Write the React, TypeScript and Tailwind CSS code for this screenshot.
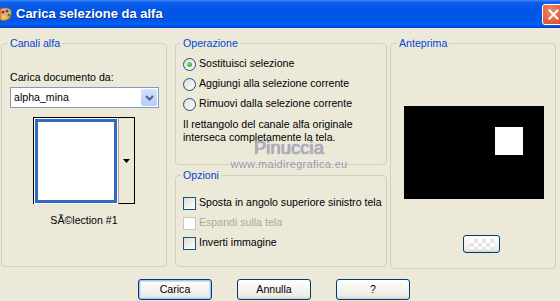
import React from "react";

const GroupBox = ({
  title,
  className,
  legendLeft,
  children,
}: {
  title: string;
  className: string;
  legendLeft: string;
  children?: React.ReactNode;
}) => {
  return (
    <div className={`relative rounded-[4px] border border-[#D0D0BF] ${className}`}>
      <span
        className={`absolute -top-[8px] ${legendLeft} bg-[#ECE9D8] px-[2px] leading-[14px] text-[#0046D5]`}
      >
        {title}
      </span>
      {children}
    </div>
  );
};

const Radio = ({ label, checked }: { label: string; checked?: boolean }) => (
  <div className="flex h-[20px] items-center">
    <div className="flex h-[13px] w-[13px] items-center justify-center rounded-full border border-[#1C5180] bg-[linear-gradient(135deg,#DCDBD5,#FFFFFF)]">
      {checked && (
        <div className="h-[5px] w-[5px] rounded-full bg-[radial-gradient(circle_at_35%_35%,#7BE27B,#21A121)]" />
      )}
    </div>
    <span className="ml-[3px]">{label}</span>
  </div>
);

const Checkbox = ({ label, disabled }: { label: string; disabled?: boolean }) => (
  <div className="flex h-[20px] items-center">
    <div
      className={
        disabled
          ? "h-[13px] w-[13px] border border-[#CAC8BB] bg-white"
          : "h-[13px] w-[13px] border border-[#1C5180] bg-[linear-gradient(135deg,#DCDCD7,#FFFFFF)]"
      }
    />
    <span className={`ml-[3px] ${disabled ? "text-[#ACA899]" : ""}`}>{label}</span>
  </div>
);

const XpButton = ({
  label,
  isDefault,
}: {
  label: string;
  isDefault?: boolean;
}) => (
  <div
    className={`flex h-[21px] w-[74px] items-center justify-center rounded-[3px] border border-[#003C74] bg-[linear-gradient(180deg,#FFFFFF_0%,#F4F3EE_50%,#ECEBE6_85%,#D6D0C5_100%)] ${
      isDefault
        ? "shadow-[inset_0_0_0_1px_#A8C5F5,inset_0_0_0_2px_#CEE0FC]"
        : ""
    }`}
  >
    {label}
  </div>
);

export default function App() {
  return (
    <div className="relative h-[301px] w-[560px] overflow-hidden bg-[#ECE9D8] font-['Liberation_Sans',Arial,sans-serif] text-[10.6px] text-black">
      {/* title bar */}
      <div className="flex h-[28px] items-center bg-[linear-gradient(180deg,#3D8FF7_0%,#0F5FEC_8%,#0055E5_40%,#0058EA_75%,#0862F2_88%,#0050DE_94%,#003CCF_100%)]">
        <svg width="13" height="16" viewBox="0 0 13 16">
          <path d="M0 3 Q7 0 11 4 Q13 8 9 13 Q5 16 0 14 Z" fill="#E8B070" stroke="#8A5020" strokeWidth="0.8" />
          <circle cx="3" cy="6" r="1.6" fill="#D02020" />
          <circle cx="7" cy="5" r="1.5" fill="#2050E0" />
          <circle cx="9" cy="9" r="1.5" fill="#20A020" />
          <circle cx="4" cy="11" r="1.5" fill="#F0E020" />
        </svg>
        <span className="ml-[3px] text-[13px] font-bold text-white [text-shadow:1px_1px_#0A2D8F]">
          Carica selezione da alfa
        </span>
        <div className="ml-auto -mr-[4px] flex h-[21px] w-[22px] items-center justify-center rounded-[3px] border border-white bg-[radial-gradient(circle_at_40%_30%,#F08A6A,#D9441E)]">
          <svg width="11" height="11" viewBox="0 0 11 11">
            <path d="M1.5 1.5 L9.5 9.5 M9.5 1.5 L1.5 9.5" stroke="white" strokeWidth="2" strokeLinecap="square" />
          </svg>
        </div>
      </div>

      {/* groups */}
      <div className="flex items-start pl-[1px] pt-[15px]">
        <GroupBox title="Canali alfa" className="h-[224px] w-[166px]" legendLeft="left-[6px]">
          <div className="flex flex-col px-[8px] pt-[27px]">
            <div className="h-[13px] leading-[13px]">Carica documento da:</div>
            <div className="mt-[3px] flex h-[21px] w-[149px] items-center border border-[#7F9DB9] bg-white">
              <span className="pl-[3px]">alpha_mina</span>
              <div className="ml-auto mr-[1px] flex h-[17px] w-[16px] items-center justify-center rounded-[2px] bg-[linear-gradient(180deg,#D3E1FC,#B6CCF8)]">
                <svg width="9" height="6" viewBox="0 0 9 6">
                  <path d="M1 1 L4.5 4.5 L8 1" fill="none" stroke="#4D6185" strokeWidth="2" />
                </svg>
              </div>
            </div>
            <div className="ml-[23px] mt-[9px] flex w-[102px] flex-col items-center">
              <div className="flex h-[87px] w-[102px] border-l border-t border-black bg-white">
                <div className="m-[1px] h-[84px] w-[83px] border-[3px] border-[#316AC5] bg-white" />
                <div className="flex h-[86px] w-[17px] items-center justify-center border-b border-l border-r border-black border-l-[#ACA899] bg-[#ECE9D8]">
                  <svg width="7" height="4" viewBox="0 0 7 4">
                    <path d="M0 0 L7 0 L3.5 4 Z" fill="black" />
                  </svg>
                </div>
              </div>
              <div className="mt-[10px] h-[13px] leading-[13px]">SÃ©lection #1</div>
            </div>
          </div>
        </GroupBox>

        <div className="ml-[8px] flex w-[212px] flex-col">
          <GroupBox title="Operazione" className="h-[122px]" legendLeft="left-[5px]">
            <div className="flex flex-col pl-[7px] pt-[10px]">
              <Radio label="Sostituisci selezione" checked />
              <Radio label="Aggiungi alla selezione corrente" />
              <Radio label="Rimuovi dalla selezione corrente" />
              <div className="mt-[4px] leading-[13px]">
                Il rettangolo del canale alfa originale
                <br />
                interseca completamente la tela.
              </div>
            </div>
          </GroupBox>
          <GroupBox title="Opzioni" className="mt-[10px] h-[92px]" legendLeft="left-[5px]">
            <div className="flex flex-col pl-[7px] pt-[17px]">
              <Checkbox label="Sposta in angolo superiore sinistro tela" />
              <Checkbox label="Espandi sulla tela" disabled />
              <Checkbox label="Inverti immagine" />
            </div>
          </GroupBox>
        </div>

        <GroupBox title="Anteprima" className="ml-[3px] h-[226px] w-[166px]" legendLeft="left-[6px]">
          <div className="flex flex-col pl-[13px] pt-[62px]">
            <div className="h-[93px] w-[140px] bg-black pl-[91px] pt-[21px]">
              <div className="h-[28px] w-[28px] bg-white" />
            </div>
            <div className="ml-[59px] mt-[36px] flex h-[18px] w-[37px] items-center justify-center rounded-[3px] border border-[#003C74] bg-[linear-gradient(180deg,#FFFFFF,#ECEBE6_85%,#D6D0C5)]">
              <div className="h-[10px] w-[24px] bg-[repeating-conic-gradient(#E4E4E4_0_25%,#FFFFFF_0_50%)] bg-[length:8px_8px]" />
            </div>
          </div>
        </GroupBox>
      </div>

      {/* buttons */}
      <div className="mt-[10px] flex gap-[25px] pl-[138px]">
        <XpButton label="Carica" isDefault />
        <XpButton label="Annulla" />
        <XpButton label="?" />
      </div>

      {/* watermark */}
      <div className="pointer-events-none absolute left-[232px] top-[138px] flex w-[114px] flex-col items-center">
        <span className="text-[18.5px] leading-[20px] text-[#AFAFC2] [text-shadow:0_0_1px_#6E6E88]">
          Pinuccia
        </span>
        <span className="text-[11px] leading-[12px] tracking-[0.3px] text-[#9494A8] [text-shadow:0_0_1px_#FFFFFF]">
          www.maidiregrafica.eu
        </span>
      </div>
    </div>
  );
}
